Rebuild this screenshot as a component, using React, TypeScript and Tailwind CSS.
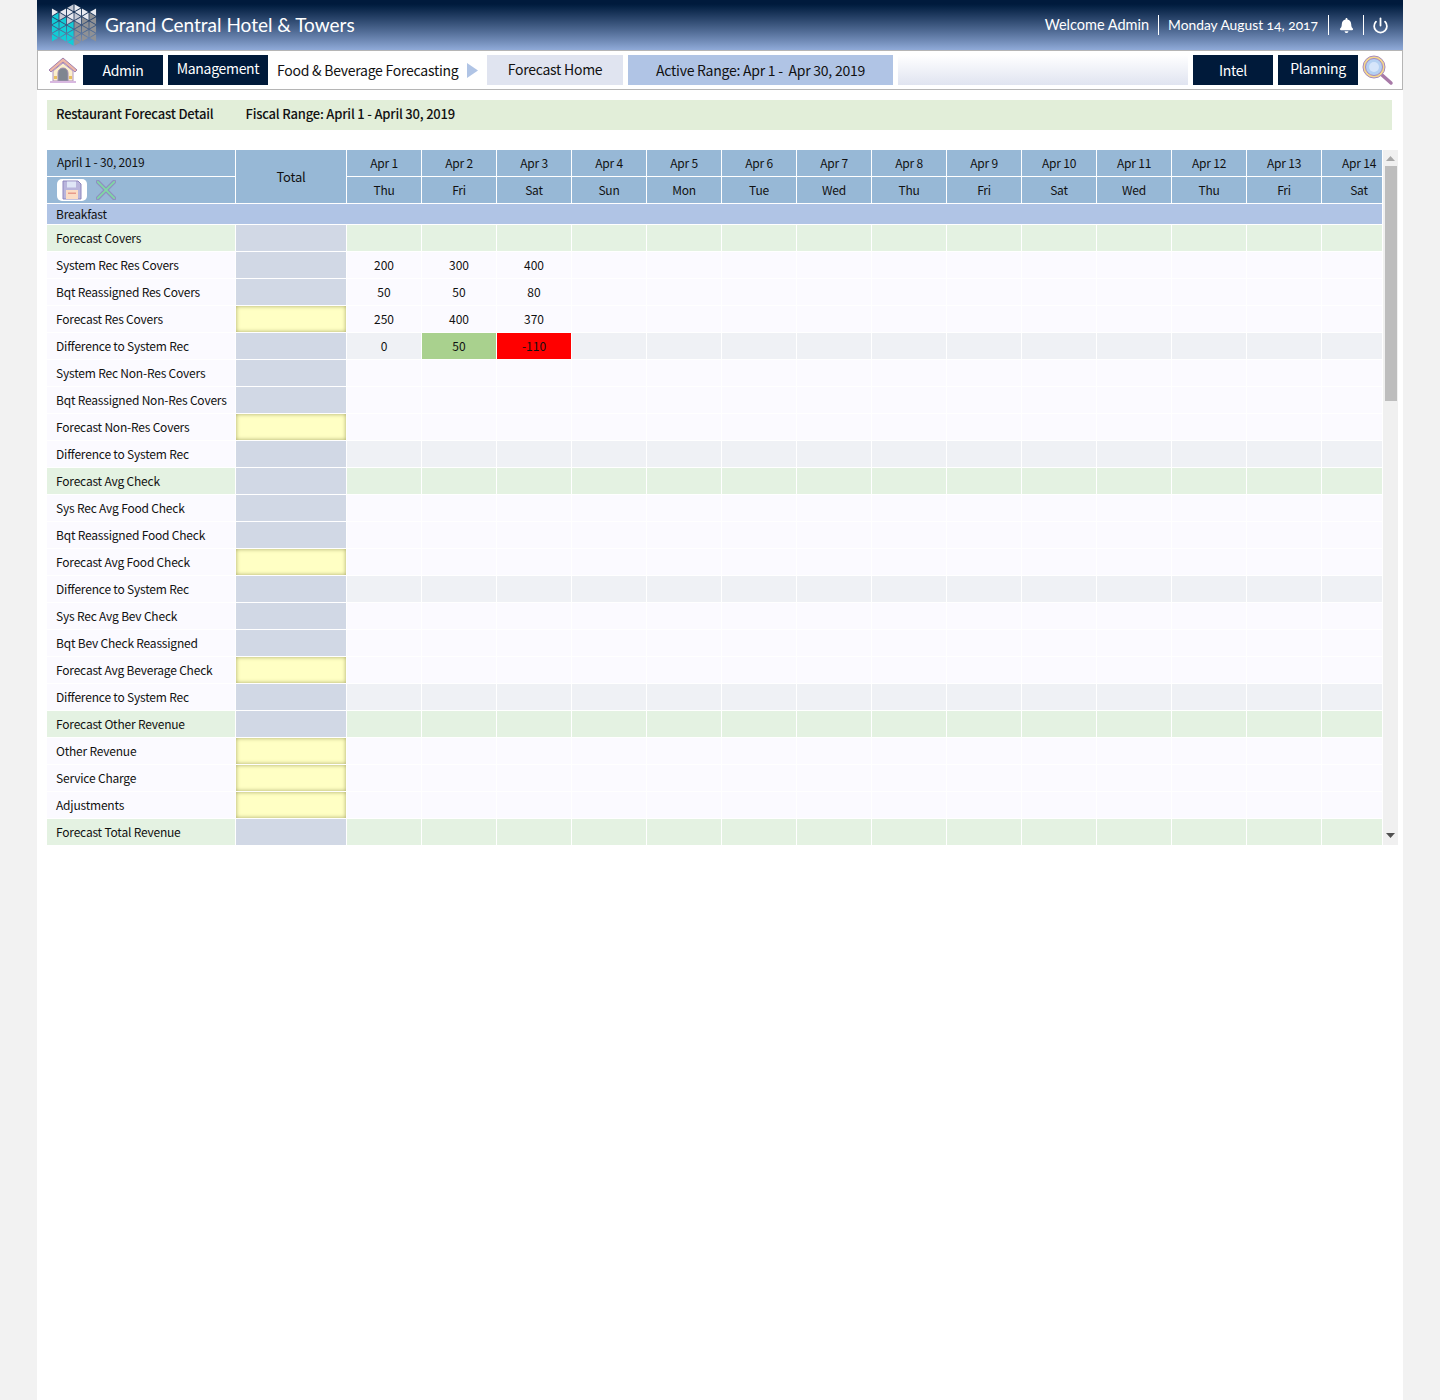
import { Fragment } from "react"
import { FaBell } from "react-icons/fa"
import { Power } from "lucide-react"

type RowKind = "green" | "plain" | "diff"

type Row = {
    label: string
    kind: RowKind
    input?: boolean
    values?: string[]
}

const DAYS = [
    ["Apr 1", "Thu"], ["Apr 2", "Fri"], ["Apr 3", "Sat"], ["Apr 4", "Sun"], ["Apr 5", "Mon"],
    ["Apr 6", "Tue"], ["Apr 7", "Wed"], ["Apr 8", "Thu"], ["Apr 9", "Fri"], ["Apr 10", "Sat"],
    ["Apr 11", "Wed"], ["Apr 12", "Thu"], ["Apr 13", "Fri"], ["Apr 14", "Sat"],
]

const ROWS: Row[] = [
    { label: "Forecast Covers", kind: "green" },
    { label: "System Rec Res Covers", kind: "plain", values: ["200", "300", "400"] },
    { label: "Bqt Reassigned Res Covers", kind: "plain", values: ["50", "50", "80"] },
    { label: "Forecast Res Covers", kind: "plain", input: true, values: ["250", "400", "370"] },
    { label: "Difference to System Rec", kind: "diff", values: ["0", "50", "-110"] },
    { label: "System Rec Non-Res Covers", kind: "plain" },
    { label: "Bqt Reassigned Non-Res Covers", kind: "plain" },
    { label: "Forecast Non-Res Covers", kind: "plain", input: true },
    { label: "Difference to System Rec", kind: "diff" },
    { label: "Forecast Avg Check", kind: "green" },
    { label: "Sys Rec Avg Food Check", kind: "plain" },
    { label: "Bqt Reassigned Food Check", kind: "plain" },
    { label: "Forecast Avg Food Check", kind: "plain", input: true },
    { label: "Difference to System Rec", kind: "diff" },
    { label: "Sys Rec Avg Bev Check", kind: "plain" },
    { label: "Bqt Bev Check Reassigned", kind: "plain" },
    { label: "Forecast Avg Beverage Check", kind: "plain", input: true },
    { label: "Difference to System Rec", kind: "diff" },
    { label: "Forecast Other Revenue", kind: "green" },
    { label: "Other Revenue", kind: "plain", input: true },
    { label: "Service Charge", kind: "plain", input: true },
    { label: "Adjustments", kind: "plain", input: true },
    { label: "Forecast Total Revenue", kind: "green" },
]

// triangle lattice clipped to a hexagon, coloured by sector
function buildLogo() {
    const tris: { points: string; fill: string }[] = []
    const cx = 23
    const cy = 23
    const colWidth = 7.5
    const step = 8.6
    for (let col = 0; col < 6; col++) {
        const x0 = 0.5 + col * colWidth
        const x1 = x0 + colWidth
        for (let n = -4; n < 5; n++) {
            for (const dir of [0, 1]) {
                const y = cy + step * n + (col % 2 === 0 ? 0 : step / 2) + (dir === 1 ? step / 2 : 0)
                const pts =
                    dir === 0
                        ? [[x0, y], [x0, y + step], [x1, y + step / 2]]
                        : [[x1, y], [x1, y + step], [x0, y + step / 2]]
                const mx = (pts[0][0] + pts[1][0] + pts[2][0]) / 3
                const my = (pts[0][1] + pts[1][1] + pts[2][1]) / 3
                const dx = mx - cx
                const dy = my - cy
                if (Math.abs(dy) > 23 - Math.abs(dx) * 0.5) continue
                const angle = (Math.atan2(dy, dx) * 180) / Math.PI
                let fill = "#8f9195"
                if (angle > -150 && angle < -30) fill = (col + n) % 2 === 0 ? "#e8eaf0" : "#c6cad4"
                else if (angle >= 90 || angle <= -150) fill = "#12ccd6"
                const shrunk = pts.map(([px, py]) => `${mx + (px - mx) * 0.82},${my + (py - my) * 0.82}`)
                tris.push({ points: shrunk.join(" "), fill })
            }
        }
    }
    return tris
}

const LOGO_TRIANGLES = buildLogo()

function Logo() {
    return (
        <svg width="46" height="46" viewBox="0 0 46 46" className="shrink-0">
            {LOGO_TRIANGLES.map((t) => (
                <polygon key={t.points} points={t.points} fill={t.fill} />
            ))}
        </svg>
    )
}

function HouseIcon() {
    return (
        <svg width="30" height="27" viewBox="0 0 30 27" className="shrink-0">
            <path d="M15 1 L29 13 L27 15 L15 5 L3 15 L1 13 Z" fill="#eeb7a6" stroke="#a080b0" strokeWidth="1" />
            <path d="M5 14 L15 6 L25 14 V24 H5 Z" fill="#fbeecb" stroke="#b094c0" strokeWidth="1" />
            <path d="M10 24 V16 a5 5 0 0 1 10 0 V24 Z" fill="#7f8690" stroke="#a18fb0" strokeWidth="1" />
            <rect x="6" y="19" width="3" height="3" fill="#e8c060" />
            <rect x="21" y="19" width="3" height="3" fill="#e8c060" />
            <rect x="2" y="24" width="26" height="2" fill="#d8b8e0" />
        </svg>
    )
}

function SearchIcon() {
    return (
        <svg width="32" height="31" viewBox="0 0 32 31" className="-ml-px shrink-0">
            <line x1="20" y1="20" x2="29" y2="28" stroke="#a87aa8" strokeWidth="3.5" strokeLinecap="round" />
            <circle cx="12" cy="12" r="11" fill="#f5d98a" stroke="#a58ac0" strokeWidth="1" />
            <circle cx="12" cy="12" r="8.5" fill="#b4d0f2" stroke="#a58ac0" strokeWidth="1" />
            <circle cx="12" cy="12" r="5" fill="#d6e5fa" />
        </svg>
    )
}

function SaveIcon() {
    return (
        <div className="flex h-[22px] w-[30px] items-center justify-center rounded-[5px] bg-white">
            <svg width="20" height="20" viewBox="0 0 20 20">
                <path d="M1 1 H16 L19 4 V19 H1 Z" fill="#b9b5dc" stroke="#8d86bd" strokeWidth="1" />
                <rect x="5" y="1.5" width="9" height="6" fill="#dfe6f7" />
                <rect x="4" y="10" width="12" height="9" fill="#fbdcc4" />
                <rect x="6" y="12.5" width="8" height="1.5" fill="#e89a8a" />
            </svg>
        </div>
    )
}

function CancelIcon() {
    return (
        <svg width="20" height="20" viewBox="0 0 22 22">
            <path d="M2 2 L20 20 M20 2 L2 20" stroke="#8f8fc0" strokeWidth="4.5" strokeLinecap="round" />
            <path d="M2 2 L20 20 M20 2 L2 20" stroke="#7fd8a4" strokeWidth="2" strokeLinecap="round" />
        </svg>
    )
}

function DarkButton({ children, width, raised }: { children: string; width: string; raised?: boolean }) {
    return (
        <div className={`flex h-[30px] ${width} shrink-0 items-center justify-center bg-[#001a3a] text-[14px] tracking-[-0.3px] text-white ${raised ? "pb-[3px]" : ""}`}>
            {children}
        </div>
    )
}

const ROW_BG: Record<RowKind, string> = {
    green: "bg-[#e4f2e2]",
    plain: "bg-[#fbfaff]",
    diff: "bg-[#eff1f5]",
}

function dataCellClass(row: Row, index: number) {
    if (row.kind === "diff" && row.values && index === 1) return "bg-[#a9d18e]"
    if (row.kind === "diff" && row.values && index === 2) return "bg-[#ff0000]"
    return ROW_BG[row.kind]
}

export default function App() {
    return (
        <div className="min-h-[1400px] bg-[#f2f2f2] px-[37px] font-['Noto_Sans_CJK_JP','Noto_Sans',sans-serif] text-[#111]">
            <div className="min-h-[1400px] bg-white">
                {/* Title bar */}
                <header className="flex h-[51px] items-center justify-between border-b border-[#b5b5b5] bg-gradient-to-b from-[#001a3c] from-[8%] to-[#90aad8] pl-[14px] pr-[14px] font-['Lato',sans-serif] text-white">
                    <div className="flex items-center gap-[8px]">
                        <Logo />
                        <span className="text-[19px]">Grand Central Hotel &amp; Towers</span>
                    </div>
                    <div className="flex items-center text-[14.5px]">
                        <span className="pr-[9px]">Welcome Admin</span>
                        <span className="h-[20px] w-px bg-white" />
                        <span className="pl-[9px] pr-[10px] text-[13.8px] oldstyle-nums">Monday August 14, 2017</span>
                        <span className="h-[20px] w-px bg-white" />
                        <span className="pl-[10px] pr-[9px]">
                            <FaBell size={15} />
                        </span>
                        <span className="h-[20px] w-px bg-white" />
                        <span className="pl-[8px]">
                            <Power size={17} strokeWidth={2.5} />
                        </span>
                    </div>
                </header>

                {/* Nav bar */}
                <nav className="flex h-[39px] items-center gap-[5px] border-x border-b border-[#b5b5b5] pl-[10px] text-[14px] tracking-[-0.25px]">
                    <HouseIcon />
                    <DarkButton width="w-[80px]">Admin</DarkButton>
                    <DarkButton width="w-[100px]" raised>Management</DarkButton>
                    <span className="ml-[4px] w-[181px] shrink-0 whitespace-nowrap">Food &amp; Beverage Forecasting</span>
                    <svg width="11" height="15" viewBox="0 0 11 15" className="ml-[4px] mr-[4px] shrink-0">
                        <polygon points="0,0 11,7.5 0,15" fill="#b0c4e5" />
                    </svg>
                    <div className="flex h-[30px] w-[136px] shrink-0 items-center justify-center bg-[#e0e4f0] pb-[2px]">Forecast Home</div>
                    <div className="flex h-[30px] w-[265px] shrink-0 items-center justify-center bg-[#b0c4e5]">Active Range: Apr 1 -&nbsp; Apr 30, 2019</div>
                    <div className="h-[30px] w-[290px] shrink-0 bg-gradient-to-b from-white to-[#e0e4f0]" />
                    <DarkButton width="w-[80px]">Intel</DarkButton>
                    <DarkButton width="w-[80px]" raised>Planning</DarkButton>
                    <SearchIcon />
                </nav>

                <div className="pl-[10px] pt-[10px]">
                    {/* Page title */}
                    <div className="flex h-[30px] w-[1345px] items-center gap-[32px] bg-[#e2eed9] pb-[2px] pl-[9px] text-[13px] font-medium tracking-[-0.2px]">
                        <span>Restaurant Forecast Detail</span>
                        <span>Fiscal Range: April 1 - April 30, 2019</span>
                    </div>

                    {/* Forecast grid */}
                    <div className="mt-[20px] flex">
                        <div className="w-[1335px] shrink-0 overflow-hidden">
                            <div className="grid w-[1349px] grid-cols-[188px_110px_repeat(14,74px)] grid-rows-[26px_26px_20px_repeat(23,26px)] gap-px bg-white text-[12px] leading-none tracking-[-0.2px]">
                                <div className="flex items-center bg-[#97b8d6] pb-[2px] pl-[10px]">April 1 - 30, 2019</div>
                                <div className="row-span-2 flex items-center justify-center bg-[#97b8d6] text-[13px]">Total</div>
                                {DAYS.map(([date]) => (
                                    <div key={date} className="flex items-center justify-center bg-[#97b8d6] pb-[1px]">{date}</div>
                                ))}
                                <div className="flex items-center gap-[9px] bg-[#97b8d6] pl-[10px]">
                                    <SaveIcon />
                                    <CancelIcon />
                                </div>
                                {DAYS.map(([date, day]) => (
                                    <div key={date} className="flex items-center justify-center bg-[#97b8d6]">{day}</div>
                                ))}
                                <div className="col-span-full flex items-center bg-[#b0c4e5] pb-[1px] pl-[9px]">Breakfast</div>
                                {ROWS.map((row, rowIndex) => (
                                    <Fragment key={rowIndex}>
                                        <div className={`flex items-center whitespace-nowrap pb-[1px] pl-[9px] ${row.kind === "green" ? ROW_BG.green : ROW_BG.plain}`}>
                                            {row.label}
                                        </div>
                                        {row.input ? (
                                            <div className="bg-[#ffffc4] shadow-[inset_0_0_4px_#a8a868]" />
                                        ) : (
                                            <div className="bg-[#d1d8e5]" />
                                        )}
                                        {DAYS.map(([date], index) => (
                                            <div key={date} className={`flex items-center justify-center tracking-normal ${dataCellClass(row, index)}`}>
                                                {row.values?.[index]}
                                            </div>
                                        ))}
                                    </Fragment>
                                ))}
                            </div>
                        </div>

                        {/* Scrollbar */}
                        <div className="ml-px flex h-[695px] w-[15px] shrink-0 flex-col items-center bg-[#f0f0f0]">
                            <svg width="9" height="5" viewBox="0 0 9 5" className="mt-[6px] shrink-0">
                                <polygon points="4.5,0 9,5 0,5" fill="#a8a8a8" />
                            </svg>
                            <div className="mt-[5px] h-[235px] w-[12px] bg-[#bdbdbd]" />
                            <svg width="9" height="5" viewBox="0 0 9 5" className="mb-[7px] mt-auto shrink-0">
                                <polygon points="0,0 9,0 4.5,5" fill="#505050" />
                            </svg>
                        </div>
                    </div>
                </div>
            </div>
        </div>
    )
}
